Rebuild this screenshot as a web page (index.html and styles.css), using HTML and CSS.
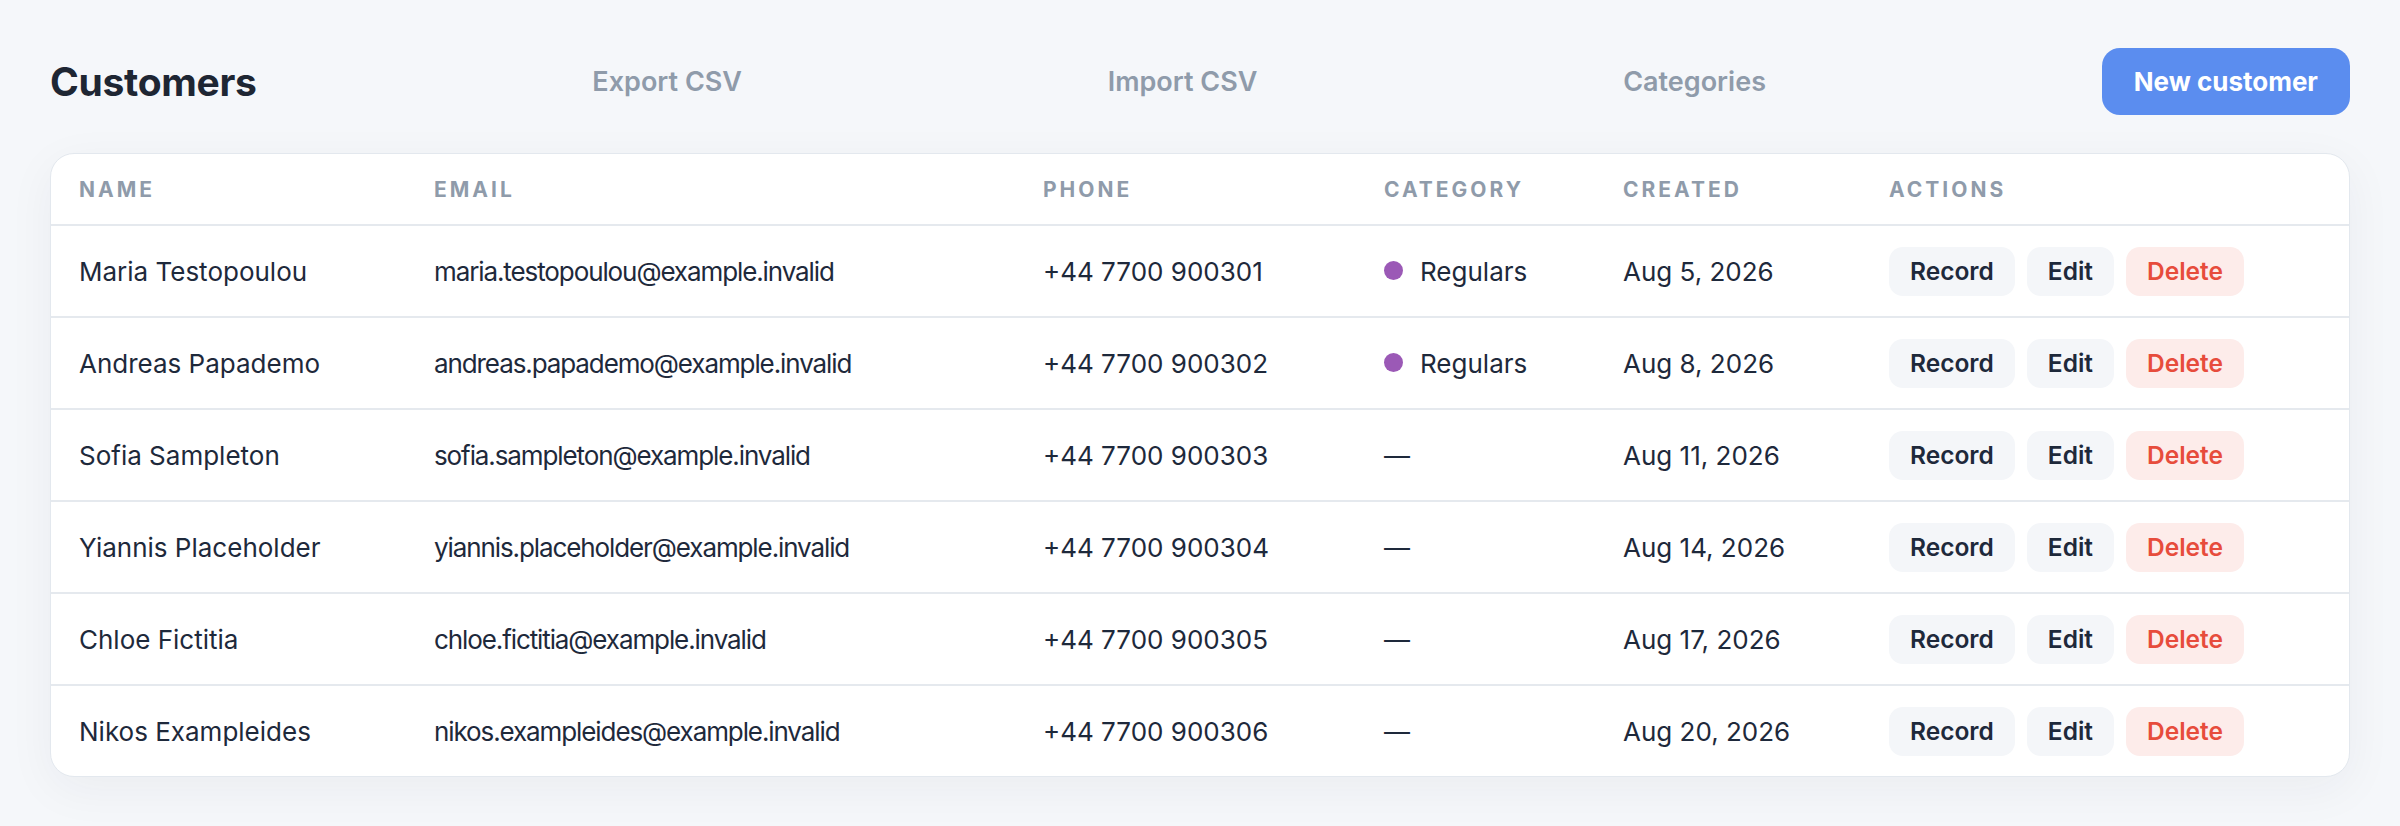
FILE: index.html
```html
<!DOCTYPE html>
<html lang="en">
<head>
  <meta charset="UTF-8">
  <title>Customers</title>
  <link rel="stylesheet" href="styles.css">
</head>
<body>

  <div class="page">
    <div class="topbar">
      <h1>Customers</h1>
      <a class="nav-link" href="#">Export CSV</a>
      <a class="nav-link" href="#">Import CSV</a>
      <a class="nav-link" href="#">Categories</a>
      <button class="btn-primary">New customer</button>
    </div>

    <div class="card">
      <table>
        <thead>
          <tr>
            <th class="col-name">Name</th>
            <th class="col-email">Email</th>
            <th class="col-phone">Phone</th>
            <th class="col-cat">Category</th>
            <th class="col-created">Created</th>
            <th class="col-actions">Actions</th>
          </tr>
        </thead>
        <tbody>
          <tr>
            <td>Maria Testopoulou</td>
            <td class="email">maria.testopoulou@example.invalid</td>
            <td>+44 7700 900301</td>
            <td><span class="dot"></span>Regulars</td>
            <td>Aug 5, 2026</td>
            <td class="actions"><button class="btn">Record</button><button class="btn">Edit</button><button class="btn btn-danger">Delete</button></td>
          </tr>
          <tr>
            <td>Andreas Papademo</td>
            <td class="email">andreas.papademo@example.invalid</td>
            <td>+44 7700 900302</td>
            <td><span class="dot"></span>Regulars</td>
            <td>Aug 8, 2026</td>
            <td class="actions"><button class="btn">Record</button><button class="btn">Edit</button><button class="btn btn-danger">Delete</button></td>
          </tr>
          <tr>
            <td>Sofia Sampleton</td>
            <td class="email">sofia.sampleton@example.invalid</td>
            <td>+44 7700 900303</td>
            <td>—</td>
            <td>Aug 11, 2026</td>
            <td class="actions"><button class="btn">Record</button><button class="btn">Edit</button><button class="btn btn-danger">Delete</button></td>
          </tr>
          <tr>
            <td>Yiannis Placeholder</td>
            <td class="email">yiannis.placeholder@example.invalid</td>
            <td>+44 7700 900304</td>
            <td>—</td>
            <td>Aug 14, 2026</td>
            <td class="actions"><button class="btn">Record</button><button class="btn">Edit</button><button class="btn btn-danger">Delete</button></td>
          </tr>
          <tr>
            <td>Chloe Fictitia</td>
            <td class="email">chloe.fictitia@example.invalid</td>
            <td>+44 7700 900305</td>
            <td>—</td>
            <td>Aug 17, 2026</td>
            <td class="actions"><button class="btn">Record</button><button class="btn">Edit</button><button class="btn btn-danger">Delete</button></td>
          </tr>
          <tr>
            <td>Nikos Exampleides</td>
            <td class="email">nikos.exampleides@example.invalid</td>
            <td>+44 7700 900306</td>
            <td>—</td>
            <td>Aug 20, 2026</td>
            <td class="actions"><button class="btn">Record</button><button class="btn">Edit</button><button class="btn btn-danger">Delete</button></td>
          </tr>
        </tbody>
      </table>
    </div>
  </div>

</body>
</html>
```

FILE: styles.css
```css
body { margin: 0; font-family: Inter, "Noto Sans", sans-serif; background-color: #f5f7fa; color: #1e293b; }
.page { padding: 48px 50px 50px; }

.topbar { display: flex; align-items: center; justify-content: space-between; margin-bottom: 38px; }
h1 { margin: 0; font-size: 39px; font-weight: 700; color: #1e2633; letter-spacing: -0.3px; }
.nav-link { padding: 0 30px; font-size: 27px; font-weight: 600; color: #8f9baa; text-decoration: none; }
.btn-primary { font-family: inherit; font-size: 26px; font-weight: 700; color: #fff; background-color: #5b8def; border: none; border-radius: 18px; height: 67px; padding: 0 32px; }

.card { background: #fff; border: 1px solid #e3e8ee; border-radius: 24px; overflow: hidden; box-shadow: 0 12px 48px rgba(30, 41, 59, 0.05); }
table { width: 100%; border-collapse: collapse; table-layout: fixed; }
th { text-align: left; height: 70px; padding: 0 0 0 28px; font-size: 21px; font-weight: 700; letter-spacing: 3px; text-transform: uppercase; color: #8f9baa; border-bottom: 2px solid #e5e9ee; }
td { height: 90px; padding: 0 0 0 28px; font-size: 26px; border-top: 2px solid #e5e9ee; white-space: nowrap; }
tbody tr:first-child td { border-top: none; }
.email { letter-spacing: -1.1px; }

.col-name { width: 327px; }
.col-email { width: 581px; }
.col-phone { width: 313px; }
.col-cat { width: 211px; }
.col-created { width: 238px; }

.dot { display: inline-block; width: 19px; height: 19px; border-radius: 50%; background-color: #9b59b6; margin-right: 17px; vertical-align: 1px; }

.actions { padding-left: 28px; }
.btn { font-family: inherit; font-size: 24.5px; font-weight: 600; color: #1e293b; background-color: #f4f6f9; border: none; border-radius: 14px; height: 49px; padding: 0 21px; margin-right: 12px; }
.btn-danger { color: #e74c3c; background-color: #fdecea; }
```
